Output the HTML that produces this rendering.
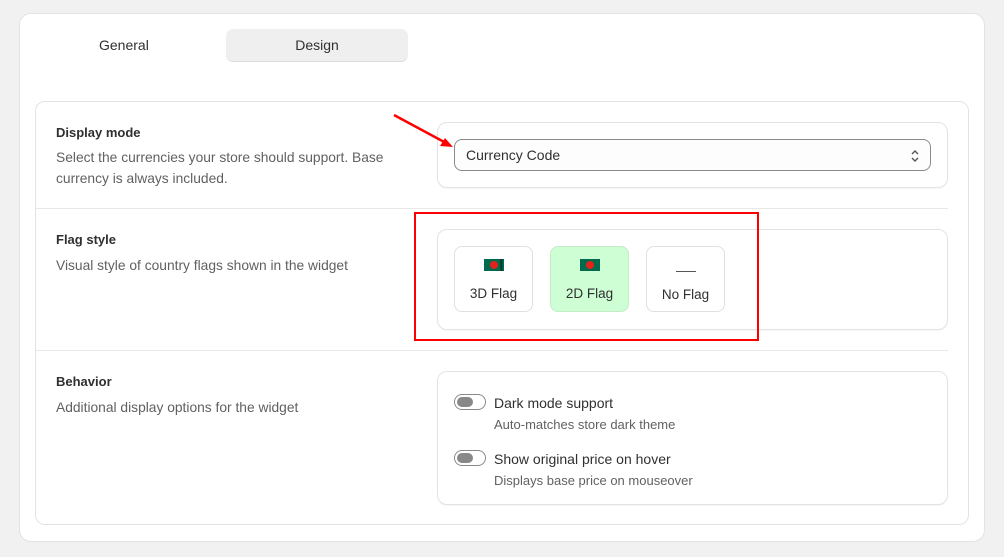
<!DOCTYPE html>
<html><head><style>
*{box-sizing:border-box;margin:0;padding:0}
body{width:1004px;height:557px;background:#f1f1f1;font-family:"Liberation Sans",sans-serif;color:#303030;position:relative;overflow:hidden}
.abs{position:absolute}
.outer{left:19px;top:13px;width:966px;height:529px;background:#fff;border:1px solid #e3e3e3;border-radius:12px}
.inner{left:35px;top:101px;width:934px;height:424px;background:#fff;border:1px solid #e3e3e3;border-radius:10px}
.box{border:1px solid #e3e3e3;border-radius:10px;background:#fff;box-shadow:0 1px 1px rgba(0,0,0,.04)}
.h{font-size:13px;font-weight:bold;color:#303030}
.d{font-size:13.8px;color:#616161;line-height:21px}
.fb{width:79px;height:66px;border:1px solid #e0e0e0;border-radius:8px;background:#fff;text-align:center;font-size:13.5px;color:#303030}
.flag{width:20px;height:12px;background:#006a4e;margin:12px auto 15px;position:relative}
.flag:after{content:"";position:absolute;left:6px;top:2px;width:8px;height:8px;border-radius:50%;background:#e2231a}
.tog{width:32px;height:16px;border:1px solid #8a8a8a;border-radius:8px}
.tog:after{content:"";position:absolute;left:2px;top:2px;width:16px;height:10px;border-radius:5px;background:#888}
</style></head><body>
<div class="abs outer"></div>
<div class="abs" style="left:99px;top:37px;font-size:14px">General</div>
<div class="abs" style="left:226px;top:29px;width:182px;height:33px;background:#efefef;border-radius:7px;border-bottom:1px solid #ddd;text-align:center;line-height:32px;font-size:14px">Design</div>
<div class="abs inner"></div>
<div class="abs" style="left:36px;top:208px;width:912px;height:1px;background:#e8e8e8"></div>
<div class="abs" style="left:36px;top:350px;width:912px;height:1px;background:#e8e8e8"></div>

<div class="abs h" style="left:56px;top:125px">Display mode</div>
<div class="abs d" style="left:56px;top:147px;width:360px">Select the currencies your store should support. Base currency is always included.</div>
<div class="abs box" style="left:437px;top:122px;width:511px;height:66px"></div>
<div class="abs" style="left:454px;top:139px;width:477px;height:32px;border:1px solid #8a8a8a;border-radius:8px;background:#fdfdfd;font-size:14px;line-height:31px;padding-left:11px">Currency Code
<svg class="abs" style="right:10px;top:9px" width="10" height="14" viewBox="0 0 10 14"><path d="M2 5l3-3 3 3M2 9l3 3 3-3" fill="none" stroke="#555" stroke-width="1.4"/></svg></div>

<div class="abs h" style="left:56px;top:232px">Flag style</div>
<div class="abs d" style="left:56px;top:255px">Visual style of country flags shown in the widget</div>
<div class="abs box" style="left:437px;top:229px;width:511px;height:101px"></div>
<div class="abs fb" style="left:454px;top:246px"><div class="flag" style="background:linear-gradient(90deg,#006a4e 80%,#0a2a1a 85%,#006a4e 95%)"></div>3D Flag</div>
<div class="abs fb" style="left:550px;top:246px;background:#cdfed4;border-color:#c4ecc9"><div class="flag"></div>2D Flag</div>
<div class="abs fb" style="left:646px;top:246px"><div style="width:20px;height:1px;background:#555;margin:24px auto 15px"></div>No Flag</div>
<div class="abs" style="left:414px;top:212px;width:345px;height:129px;border:2.5px solid #f00"></div>

<div class="abs h" style="left:56px;top:374px">Behavior</div>
<div class="abs d" style="left:56px;top:397px">Additional display options for the widget</div>
<div class="abs box" style="left:437px;top:371px;width:511px;height:134px"></div>
<div class="abs tog" style="left:454px;top:394px"></div>
<div class="abs" style="left:494px;top:395px;font-size:14px">Dark mode support</div>
<div class="abs" style="left:494px;top:417px;font-size:13px;color:#616161">Auto-matches store dark theme</div>
<div class="abs tog" style="left:454px;top:450px"></div>
<div class="abs" style="left:494px;top:451px;font-size:14px">Show original price on hover</div>
<div class="abs" style="left:494px;top:473px;font-size:13px;color:#616161">Displays base price on mouseover</div>

<svg class="abs" style="left:0;top:0" width="1004" height="557"><line x1="394" y1="115" x2="446" y2="143" stroke="#f00" stroke-width="2.5"/><path d="M453 147l-13-1 5-8z" fill="#f00"/></svg>
</body></html>
